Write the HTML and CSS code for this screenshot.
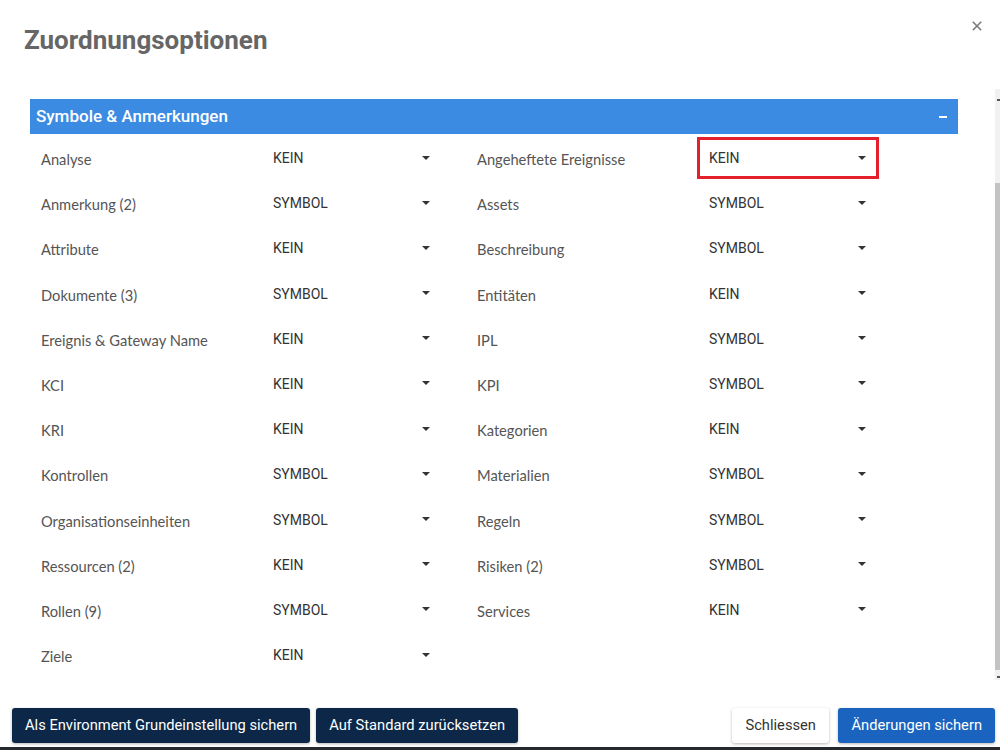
FILE: index.html
```html
<!DOCTYPE html>
<html lang="de">
<head>
<meta charset="utf-8">
<title>Zuordnungsoptionen</title>
<link rel="stylesheet" href="styles.css">
</head>
<body>
<div class="dialog">
  <div class="dialog-head">
    <h1 class="title">Zuordnungsoptionen</h1>
    <button class="close" aria-label="Schliessen">
      <svg width="10" height="10" viewBox="0 0 10 10"><path d="M0.8 0.8 L9.2 9.2 M9.2 0.8 L0.8 9.2" stroke="#7a7a7a" stroke-width="1.6" fill="none"/></svg>
    </button>
  </div>

  <div class="dialog-body">
    <section class="panel">
      <div class="panel-bar">
        <span class="panel-title">Symbole &amp; Anmerkungen</span>
        <span class="panel-toggle"></span>
      </div>
      <div class="fields">
        <div class="field"><span class="label">Analyse</span><div class="select"><span>KEIN</span><i class="caret"></i></div></div>
        <div class="field"><span class="label">Angeheftete Ereignisse</span><div class="select highlighted"><span>KEIN</span><i class="caret"></i></div></div>
        <div class="field"><span class="label">Anmerkung (2)</span><div class="select"><span>SYMBOL</span><i class="caret"></i></div></div>
        <div class="field"><span class="label">Assets</span><div class="select"><span>SYMBOL</span><i class="caret"></i></div></div>
        <div class="field"><span class="label">Attribute</span><div class="select"><span>KEIN</span><i class="caret"></i></div></div>
        <div class="field"><span class="label">Beschreibung</span><div class="select"><span>SYMBOL</span><i class="caret"></i></div></div>
        <div class="field"><span class="label">Dokumente (3)</span><div class="select"><span>SYMBOL</span><i class="caret"></i></div></div>
        <div class="field"><span class="label">Entitäten</span><div class="select"><span>KEIN</span><i class="caret"></i></div></div>
        <div class="field"><span class="label">Ereignis &amp; Gateway Name</span><div class="select"><span>KEIN</span><i class="caret"></i></div></div>
        <div class="field"><span class="label">IPL</span><div class="select"><span>SYMBOL</span><i class="caret"></i></div></div>
        <div class="field"><span class="label">KCI</span><div class="select"><span>KEIN</span><i class="caret"></i></div></div>
        <div class="field"><span class="label">KPI</span><div class="select"><span>SYMBOL</span><i class="caret"></i></div></div>
        <div class="field"><span class="label">KRI</span><div class="select"><span>KEIN</span><i class="caret"></i></div></div>
        <div class="field"><span class="label">Kategorien</span><div class="select"><span>KEIN</span><i class="caret"></i></div></div>
        <div class="field"><span class="label">Kontrollen</span><div class="select"><span>SYMBOL</span><i class="caret"></i></div></div>
        <div class="field"><span class="label">Materialien</span><div class="select"><span>SYMBOL</span><i class="caret"></i></div></div>
        <div class="field"><span class="label">Organisationseinheiten</span><div class="select"><span>SYMBOL</span><i class="caret"></i></div></div>
        <div class="field"><span class="label">Regeln</span><div class="select"><span>SYMBOL</span><i class="caret"></i></div></div>
        <div class="field"><span class="label">Ressourcen (2)</span><div class="select"><span>KEIN</span><i class="caret"></i></div></div>
        <div class="field"><span class="label">Risiken (2)</span><div class="select"><span>SYMBOL</span><i class="caret"></i></div></div>
        <div class="field"><span class="label">Rollen (9)</span><div class="select"><span>SYMBOL</span><i class="caret"></i></div></div>
        <div class="field"><span class="label">Services</span><div class="select"><span>KEIN</span><i class="caret"></i></div></div>
        <div class="field"><span class="label">Ziele</span><div class="select"><span>KEIN</span><i class="caret"></i></div></div>
      </div>
    </section>
    <div class="scrollbar"><i class="sb-arrow up"></i><div class="sb-thumb"></div><i class="sb-arrow down"></i></div>
  </div>

  <div class="dialog-foot">
    <div class="foot-left">
      <button class="btn btn-dark">Als Environment Grundeinstellung sichern</button>
      <button class="btn btn-dark">Auf Standard zurücksetzen</button>
    </div>
    <div class="foot-right">
      <button class="btn btn-light">Schliessen</button>
      <button class="btn btn-primary">Änderungen sichern</button>
    </div>
  </div>
</div>
</body>
</html>
```

FILE: styles.css
```css
* { box-sizing: border-box; }

html, body {
  margin: 0;
  padding: 0;
  background: #ffffff;
}

body {
  width: 1000px;
  height: 750px;
  overflow: hidden;
  font-family: Roboto, "Liberation Sans", sans-serif;
}

.dialog {
  position: relative;
  width: 1000px;
  height: 750px;
  display: flex;
  flex-direction: column;
  background: #ffffff;
  border-bottom: 3px solid #262a2e;
}

.dialog-head {
  position: relative;
  height: 99px;
  padding: 25px 24px 0;
}

.title {
  margin: 0;
  font-family: Roboto, "Liberation Sans", sans-serif;
  font-size: 26px;
  line-height: 30px;
  font-weight: 700;
  color: #666666;
}

.close {
  position: absolute;
  top: 21px;
  right: 18px;
  width: 10px;
  height: 10px;
  padding: 0;
  border: 0;
  background: none;
  display: flex;
}

.dialog-body {
  position: relative;
  flex: 1;
}

.panel {
  width: 928px;
  margin-left: 30px;
}

.panel-bar {
  height: 35px;
  background: #3b8be2;
  display: flex;
  align-items: center;
  justify-content: space-between;
  padding: 0 11px 0 6px;
}

.panel-title {
  color: #ffffff;
  font-size: 17px;
  font-weight: 500;
  line-height: 35px;
}

.panel-toggle {
  width: 8px;
  height: 2px;
  background: #ffffff;
  margin-top: 1px;
}

.fields {
  display: grid;
  grid-template-columns: 436px 436px;
  grid-auto-rows: 45.2px;
  padding-top: 3px;
}

.field {
  display: flex;
  align-items: flex-start;
  padding-left: 11px;
}

.label {
  width: 223px;
  margin-top: 12px;
  font-family: Lato, "Noto Sans", sans-serif;
  font-size: 14.7px;
  line-height: 20px;
  color: #555555;
}

.select {
  width: 176px;
  height: 36px;
  margin-top: 3px;
  display: flex;
  align-items: center;
  justify-content: space-between;
  padding: 0 10px 0 9px;
  font-size: 14px;
  color: #333333;
}

.select span {
  line-height: 20px;
}

.select.highlighted {
  outline: 3px solid #e3202b;
}

.caret {
  width: 0;
  height: 0;
  border-left: 4.5px solid transparent;
  border-right: 4.5px solid transparent;
  border-top: 4px solid #333333;
  margin-top: -1px;
}

.scrollbar {
  position: absolute;
  top: -10px;
  right: 0;
  width: 5px;
  height: 591px;
  background: #f1f1f1;
  display: flex;
  flex-direction: column;
  align-items: flex-end;
}

.sb-arrow {
  width: 3px;
  height: 2px;
  background: #555555;
}

.sb-arrow.up { margin-top: 10px; }

.sb-thumb {
  width: 5px;
  height: 487px;
  background: #c3c3c3;
  margin-top: 82px;
}

.sb-arrow.down { margin-top: 6px; }

.dialog-foot {
  display: flex;
  justify-content: space-between;
  align-items: center;
  padding: 0 5px 2px 12px;
  height: 42px;
}

.foot-left, .foot-right {
  display: flex;
  gap: 6px;
}

.foot-right { gap: 9px; }

.btn {
  height: 35px;
  padding: 0 13px;
  border: 0;
  border-radius: 3px;
  font-family: Roboto, "Liberation Sans", sans-serif;
  font-size: 14.7px;
  font-weight: 400;
  box-shadow: 0 1px 3px rgba(0, 0, 0, 0.28);
  cursor: pointer;
}

.btn-dark {
  background: #0c2747;
  color: #ffffff;
}

.btn-light {
  background: #ffffff;
  color: #333333;
  padding: 0 13.5px;
}

.btn-primary {
  background: #1a63be;
  color: #ffffff;
}
```
